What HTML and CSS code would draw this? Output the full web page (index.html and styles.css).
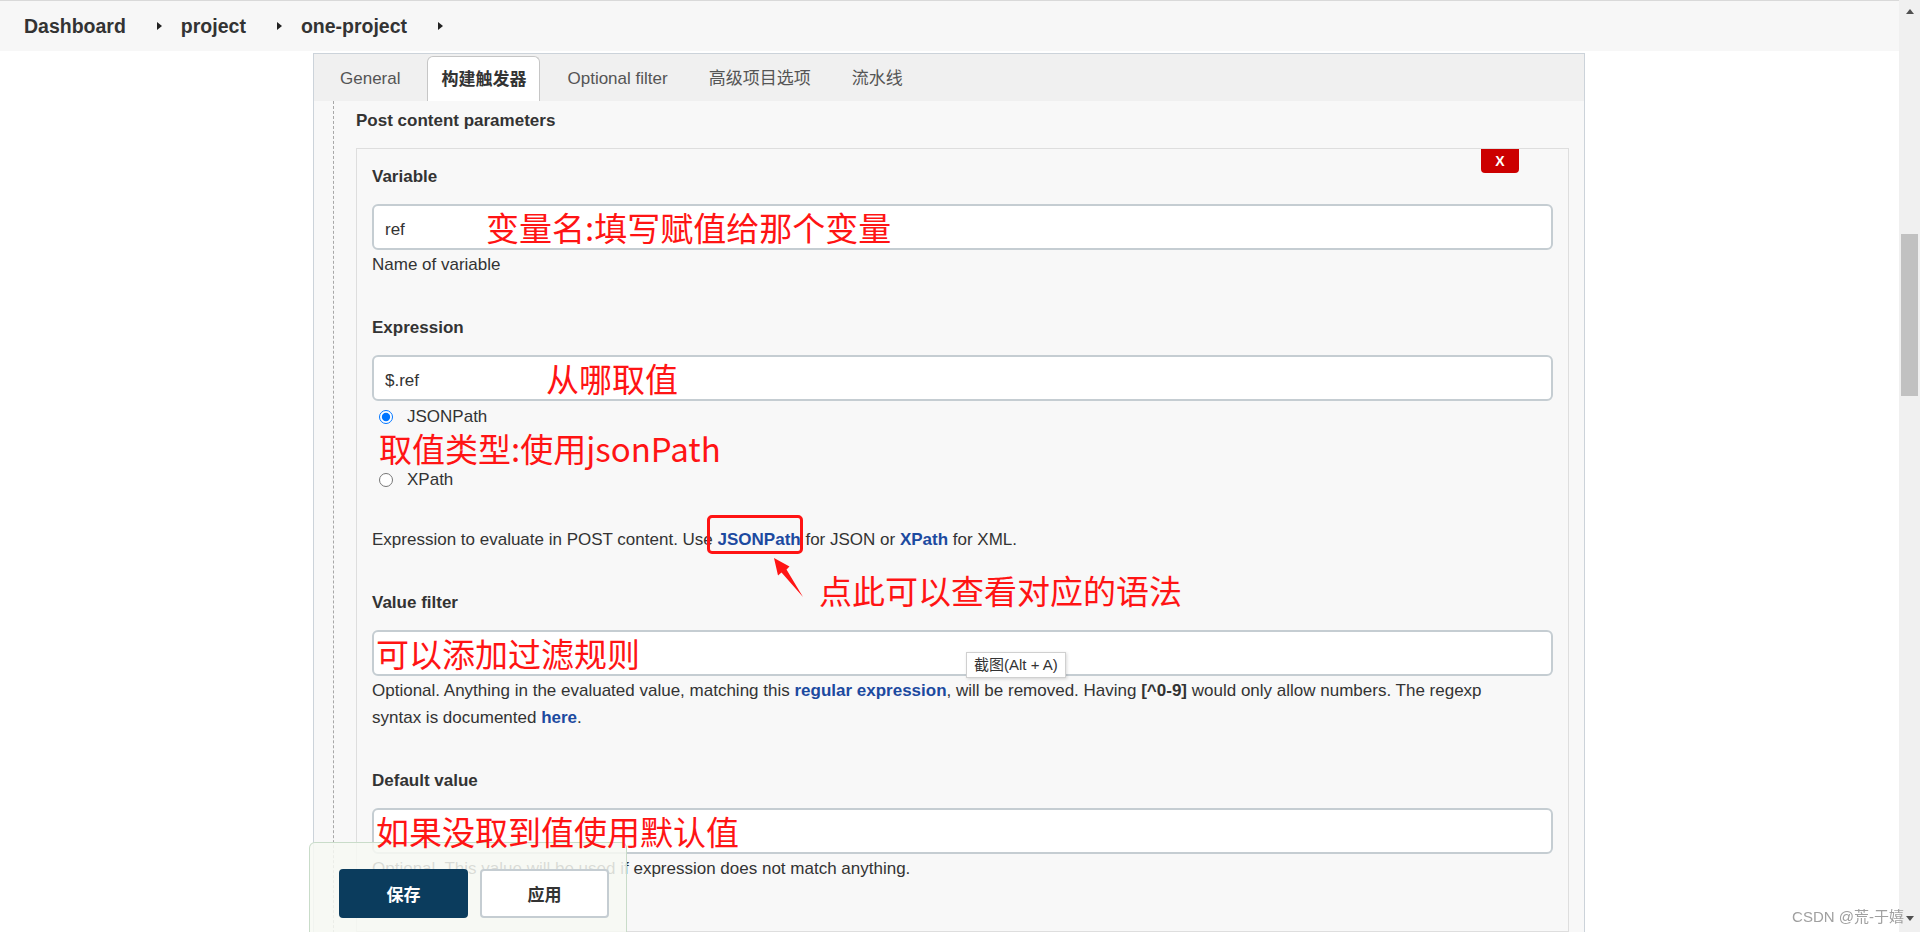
FILE: index.html
```html
<!DOCTYPE html>
<html lang="zh-CN">
<head>
  <meta charset="UTF-8" />
  <title>one-project Config [Jenkins]</title>
  <link rel="stylesheet" href="styles.css">
</head>
<body>

<div class="page">
  <header class="crumbs">
    <a class="crumb">Dashboard</a><span class="caret"></span>
    <a class="crumb">project</a><span class="caret"></span>
    <a class="crumb">one-project</a><span class="caret"></span>
  </header>

  <main class="panel">
    <nav class="tabs">
      <span class="tab">General</span>
      <span class="tab active">构建触发器</span>
      <span class="tab">Optional filter</span>
      <span class="tab">高级项目选项</span>
      <span class="tab">流水线</span>
    </nav>

    <section class="section">
      <div class="section-title">Post content parameters</div>

      <div class="chunk">
        <span class="remove">X</span>

        <div class="field">
          <div class="label">Variable</div>
          <div class="input">ref<span class="note note-var">变量名:填写赋值给那个变量</span></div>
          <div class="help">Name of variable</div>
        </div>

        <div class="field">
          <div class="label">Expression</div>
          <div class="input">$.ref<span class="note note-expr">从哪取值</span></div>
          <label class="radio"><input type="radio" name="exprType" checked> JSONPath</label>
          <div class="radio-note">取值类型:使用jsonPath</div>
          <label class="radio"><input type="radio" name="exprType"> XPath</label>
          <div class="help help-desc">
            Expression to evaluate in POST content. Use <a class="link marked">JSONPath</a> for JSON or <a class="link">XPath</a> for XML.
          </div>
          <svg class="arrow" width="46" height="50" viewBox="0 0 46 50">
            <polygon points="10,4 25.5,12.5 22.5,15.5 39,43 17.5,18.5 14,21.5" fill="#ff1414"/>
          </svg>
        </div>

        <div class="field">
          <div class="label label-row">Value filter<span class="note note-link">点此可以查看对应的语法</span></div>
          <div class="input"><span class="note note-fill">可以添加过滤规则</span><span class="tooltip">截图(Alt + A)</span></div>
          <div class="help">
            Optional. Anything in the evaluated value, matching this <a class="link">regular expression</a>, will be removed. Having <b>[^0-9]</b> would only allow numbers. The regexp<br>
            syntax is documented <a class="link">here</a>.
          </div>
        </div>

        <div class="field">
          <div class="label">Default value</div>
          <div class="input"><span class="note note-fill">如果没取到值使用默认值</span></div>
          <div class="help">Optional. This value will be used if expression does not match anything.</div>
        </div>
      </div>
    </section>
  </main>

  <div class="bottom-bar">
    <button class="btn btn-primary">保存</button>
    <button class="btn">应用</button>
  </div>
</div>

<div class="scrollbar">
  <span class="arrow-up"></span>
  <span class="thumb"></span>
  <span class="arrow-down"></span>
</div>

<div class="watermark">CSDN @荒-于嬉</div>

</body>
</html>
```

FILE: styles.css
```css
html, body {
  height: 100%;
}
body {
  margin: 0;
  display: flex;
  overflow: hidden;
  font-family: 'Segoe UI', 'Liberation Sans', 'Noto Sans CJK SC', sans-serif;
  font-size: 17px;
  color: #333;
  background: white;
}
.page {
  flex: 1;
  position: relative;
  overflow: hidden;
}

/* breadcrumbs */
.crumbs {
  height: 50px;
  display: flex;
  align-items: center;
  padding-left: 24px;
  background: #f7f7f7;
  border-top: 1px solid #d9d9d9;
}
.crumb {
  font-size: 19.5px;
  font-weight: bold;
  color: #333;
}
.caret {
  width: 0;
  height: 0;
  border-top: 4px solid transparent;
  border-bottom: 4px solid transparent;
  border-left: 5px solid #222;
  margin: 0 19px 0 31px;
}

/* config panel */
.panel {
  width: 1272px;
  margin: 2px 0 0 313px;
  height: 900px;
  box-sizing: border-box;
  border: 1px solid #ccd3da;
  border-bottom: none;
  background: #f8f8f8;
}
.tabs {
  display: flex;
  align-items: flex-end;
  height: 47px;
  padding-left: 12px;
  background: #f0f0f0;
}
.tab {
  height: 45px;
  line-height: 45px;
  padding: 0 14px;
  margin-right: 13px;
  color: #555;
  box-sizing: border-box;
}
.tab.active {
  background: white;
  color: #333;
  font-weight: bold;
  border: 1px solid #c6c6c6;
  border-bottom: none;
  border-radius: 6px 6px 0 0;
  padding: 0 13px;
}
.section {
  margin-left: 19px;
  padding: 8px 15px 0 22px;
  border-left: 1px dashed #a8a8a8;
  height: 100%;
}
.section-title {
  font-weight: bold;
  line-height: 24px;
  margin-bottom: 15px;
}
.chunk {
  position: relative;
  border: 1px solid #dedede;
  padding: 16px 15px 49px;
  background: #f8f8f8;
}
.remove {
  position: absolute;
  top: 0;
  right: 49px;
  width: 38px;
  height: 24px;
  line-height: 24px;
  text-align: center;
  background: #cc0000;
  color: white;
  font-size: 14px;
  font-weight: bold;
  border-radius: 0 0 4px 4px;
}

/* fields */
.field {
  position: relative;
}
.field + .field {
  margin-top: 38px;
}
.label {
  font-weight: bold;
  line-height: 24px;
  margin-bottom: 15px;
}
.label-row {
  position: relative;
}
.input {
  position: relative;
  height: 46px;
  box-sizing: border-box;
  border: 2px solid #c5cdd2;
  border-radius: 6px;
  background: white;
  padding: 5px 0 0 11px;
  line-height: 37px;
}
.help {
  margin-top: 1px;
  line-height: 27px;
}
.help-desc {
  margin-top: 34px;
}
.link {
  color: #1c4aa0;
  font-weight: bold;
}
.marked {
  position: relative;
}
.marked::after {
  content: "";
  position: absolute;
  top: -15px;
  bottom: -5px;
  left: -11px;
  right: -2px;
  border: 3px solid #ff1414;
  border-radius: 5px;
}
.radio {
  display: flex;
  align-items: center;
  line-height: 24px;
  margin-top: 4px;
}
.radio input {
  width: 14px;
  height: 14px;
  margin: 0 14px 0 7px;
}
.radio-note {
  margin: 3px 0 0 7px;
  font-family: 'Noto Sans CJK SC', sans-serif;
  font-size: 33px;
  line-height: 32px;
  color: #ff1414;
}

/* red annotations */
.note {
  position: absolute;
  z-index: 2;
  top: 50%;
  transform: translateY(-50%);
  font-family: 'Noto Sans CJK SC', sans-serif;
  font-size: 33px;
  font-weight: normal;
  line-height: 40px;
  color: #ff1414;
  white-space: nowrap;
}
.note-var { left: 112px; }
.note-expr { left: 172px; }
.note-fill { left: 2px; }
.note-link { left: 447px; top: -1px; }
.arrow {
  position: absolute;
  left: 392px;
  top: 238px;
}
.tooltip {
  position: absolute;
  left: 592px;
  top: 20px;
  padding: 0 7px;
  line-height: 24px;
  font-size: 15px;
  color: #333;
  background: white;
  border: 1px solid #d0d0d0;
  box-shadow: 1px 1px 3px rgba(0,0,0,0.15);
  white-space: nowrap;
}

/* sticky save bar */
.bottom-bar {
  position: absolute;
  left: 309px;
  bottom: 0;
  width: 318px;
  height: 90px;
  box-sizing: border-box;
  padding: 26px 0 0 29px;
  display: flex;
  align-items: flex-start;
  gap: 12px;
  background: rgba(247, 249, 243, 0.85);
  border: 1px solid #c9dcc9;
  border-bottom: none;
  border-radius: 6px 6px 0 0;
}
.btn {
  width: 129px;
  height: 49px;
  border: 2px solid #c5cdd2;
  border-radius: 4px;
  background: white;
  color: #333;
  font-family: inherit;
  font-size: 17px;
  font-weight: bold;
}
.btn-primary {
  background: #0b3c5d;
  border-color: #0b3c5d;
  color: white;
}

.watermark {
  position: fixed;
  right: 16px;
  bottom: 6px;
  font-size: 15px;
  color: #a0a0a0;
}

/* fake browser scrollbar */
.scrollbar {
  width: 21px;
  flex-shrink: 0;
  background: #f0f0f0;
  display: flex;
  flex-direction: column;
  align-items: center;
}
.arrow-up, .arrow-down {
  width: 0;
  height: 0;
  border-left: 4px solid transparent;
  border-right: 4px solid transparent;
}
.arrow-up {
  margin-top: 9px;
  border-bottom: 5px solid #505050;
}
.arrow-down {
  margin-top: auto;
  margin-bottom: 11px;
  border-top: 5px solid #505050;
}
.thumb {
  width: 17px;
  height: 162px;
  margin-top: 220px;
  background: #c1c1c1;
}
```
